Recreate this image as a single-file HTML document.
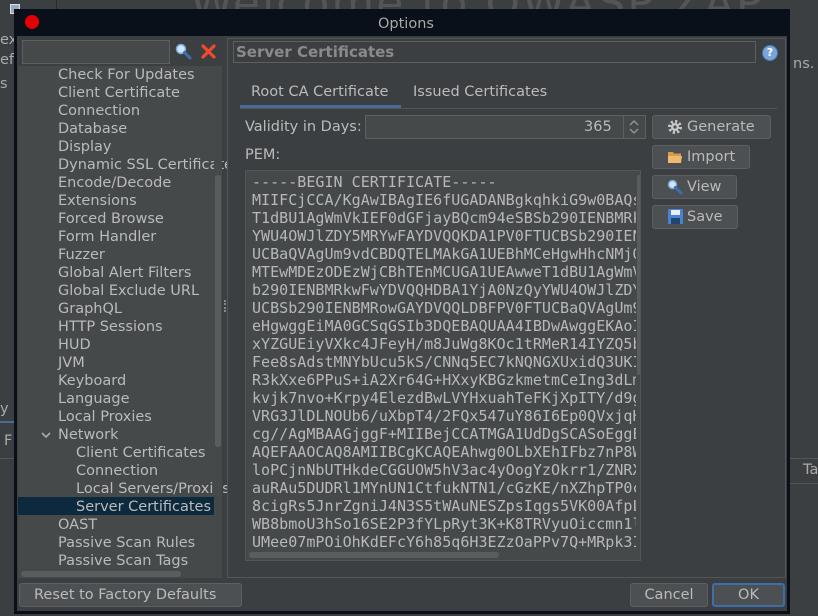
<!DOCTYPE html>
<html><head><meta charset="utf-8"><style>
*{box-sizing:border-box;margin:0;padding:0}
body{width:818px;height:616px;overflow:hidden;background:#3c3f41;font-family:"DejaVu Sans","Liberation Sans",sans-serif;font-size:14px;color:#bbbbbb;position:relative}
.a{position:absolute}
.btn{position:absolute;background:#4c5052;border:1px solid #5e6060;border-radius:3px;color:#bbb;height:24px;line-height:22px;font-size:14.5px}
.t{position:absolute;white-space:nowrap;font-size:14.5px;line-height:18px}
.mono{font-family:"DejaVu Sans Mono","Liberation Mono",monospace;font-size:15.05px;line-height:18px;color:#b8b8b8;white-space:pre}
</style></head><body>
<div class="a" style="left:0;top:0;width:818px;height:616px;background:#3c3f41"></div>
<div class="a" style="left:56px;top:0;width:1px;height:30px;background:#2b2b2b"></div>
<div class="a" style="left:190px;top:-22px;font-size:44px;color:#555;white-space:nowrap;letter-spacing:2px">Welcome to OWASP ZAP</div>
<div class="a" style="left:10px;top:4px;width:10px;height:10px;background:#9ab;border:1px solid #dde"></div>
<div class="t" style="left:0;top:31px;color:#aaa">ex</div>
<div class="t" style="left:0;top:51px;color:#aaa">efa</div>
<div class="t" style="left:0;top:75px;color:#aaa">s</div>
<div class="t" style="left:0;top:400px;color:#aaa">y</div>
<div class="a" style="left:0;top:421px;width:14px;height:2px;background:#4a6a9a"></div>
<div class="t" style="left:4px;top:432px;color:#aaa">F</div>
<div class="a" style="left:0;top:458px;width:14px;height:1px;background:#555"></div>
<div class="t" style="left:793px;top:55px;color:#aaa">ns.</div>
<div class="a" style="left:790px;top:458px;width:28px;height:1px;background:#555"></div>
<div class="a" style="left:790px;top:483px;width:28px;height:1px;background:#555"></div>
<div class="t" style="left:803px;top:461px;color:#aaa">Ta</div>

<div class="a" style="left:14px;top:9px;width:776px;height:605px;background:#0a101a"></div>
<div class="a" style="left:25px;top:15px;width:14px;height:14px;border-radius:50%;background:#e00000"></div>
<div class="a" style="left:378px;top:16px;font-size:14.5px;color:#a8a8a8">Options</div>
<div class="a" style="left:17px;top:36px;width:770px;height:575px;background:#3c3f41"></div>

<div class="a" style="left:18px;top:38px;width:204px;height:540px;background:#45494a"></div>
<div class="a" style="left:18px;top:38px;width:204px;height:28px;background:#3c3f41"></div>
<div class="a" style="left:22px;top:40px;width:148px;height:24px;border:1px solid #5e6060;background:#45494a"></div>
<svg class="a" style="left:174px;top:42px" width="18" height="18" viewBox="0 0 18 18"><circle cx="7" cy="7" r="4.5" fill="#cfe6ff" stroke="#7aa7d8" stroke-width="1.5"/><path d="M10.5 10.5 L16 16" stroke="#3b6fb0" stroke-width="3" stroke-linecap="round"/></svg>
<svg class="a" style="left:201px;top:44px" width="15" height="15" viewBox="0 0 15 15"><path d="M2 2 L13 13 M13 2 L2 13" stroke="#f04a2a" stroke-width="3.2" stroke-linecap="round"/></svg>
<div class="a" style="left:18px;top:497px;width:196px;height:18px;background:#0d293e"></div>
<div class="t" style="left:58px;top:66px">Check For Updates</div>
<div class="t" style="left:58px;top:84px">Client Certificate</div>
<div class="t" style="left:58px;top:102px">Connection</div>
<div class="t" style="left:58px;top:120px">Database</div>
<div class="t" style="left:58px;top:138px">Display</div>
<div class="t" style="left:58px;top:156px">Dynamic SSL Certificates</div>
<div class="t" style="left:58px;top:174px">Encode/Decode</div>
<div class="t" style="left:58px;top:192px">Extensions</div>
<div class="t" style="left:58px;top:210px">Forced Browse</div>
<div class="t" style="left:58px;top:228px">Form Handler</div>
<div class="t" style="left:58px;top:246px">Fuzzer</div>
<div class="t" style="left:58px;top:264px">Global Alert Filters</div>
<div class="t" style="left:58px;top:282px">Global Exclude URL</div>
<div class="t" style="left:58px;top:300px">GraphQL</div>
<div class="t" style="left:58px;top:318px">HTTP Sessions</div>
<div class="t" style="left:58px;top:336px">HUD</div>
<div class="t" style="left:58px;top:354px">JVM</div>
<div class="t" style="left:58px;top:372px">Keyboard</div>
<div class="t" style="left:58px;top:390px">Language</div>
<div class="t" style="left:58px;top:408px">Local Proxies</div>
<svg class="a" style="left:41px;top:431px" width="10" height="8"><path d="M1 2 L5 6 L9 2" stroke="#aaa" stroke-width="1.6" fill="none"/></svg>
<div class="t" style="left:58px;top:426px">Network</div>
<div class="t" style="left:76px;top:444px">Client Certificates</div>
<div class="t" style="left:76px;top:462px">Connection</div>
<div class="t" style="left:76px;top:480px">Local Servers/Proxies</div>
<div class="t" style="left:76px;top:498px">Server Certificates</div>
<div class="t" style="left:58px;top:516px">OAST</div>
<div class="t" style="left:58px;top:534px">Passive Scan Rules</div>
<div class="t" style="left:58px;top:552px">Passive Scan Tags</div>
<div class="a" style="left:214px;top:66px;width:8px;height:504px;background:#45494a"></div>
<div class="a" style="left:215px;top:175px;width:6px;height:272px;border-radius:3px;background:#5a5d5f"></div>
<div class="a" style="left:18px;top:570px;width:204px;height:8px;background:#45494a"></div>
<div class="a" style="left:21px;top:571px;width:160px;height:6px;border-radius:3px;background:#5a5d5f"></div>
<div class="a" style="left:224px;top:300px;width:2px;height:12px;border-left:2px dotted #888"></div>

<div class="a" style="left:227px;top:38px;width:559px;height:540px;border:1px solid #555;background:#3c3f41"></div>
<div class="a" style="left:233px;top:41px;width:523px;height:22px;border:1px solid #5e6060;background:#3c3f41;font-weight:bold;color:#8a8a8a;font-size:15px;line-height:20px;padding-left:2px">Server Certificates</div>
<div class="a" style="left:762px;top:45px;width:16px;height:16px;border-radius:50%;background:#7aa5d8;border:1px solid #4a78b0;color:#fff;font-size:11px;font-weight:bold;text-align:center;line-height:14px">?</div>
<div class="t" style="left:251px;top:83px">Root CA Certificate</div>
<div class="t" style="left:413px;top:83px">Issued Certificates</div>
<div class="a" style="left:240px;top:105px;width:161px;height:3px;background:#4a6a9a"></div>
<div class="a" style="left:240px;top:108px;width:537px;height:1px;background:#555"></div>
<div class="t" style="left:245px;top:118px">Validity in Days:</div>
<div class="a" style="left:365px;top:115px;width:281px;height:24px;border:1px solid #5e6060;background:#45494a"></div>
<div class="t" style="left:584px;top:118px">365</div>
<div class="a" style="left:623px;top:116px;width:1px;height:22px;background:#5e6060"></div>
<svg class="a" style="left:627px;top:118px" width="14" height="18"><path d="M3 7 L7 3 L11 7 M3 11 L7 15 L11 11" stroke="#999" stroke-width="1.3" fill="none"/></svg>
<div class="t" style="left:245px;top:146px">PEM:</div>
<div class="a" style="left:245px;top:170px;width:396px;height:391px;border:1px solid #555;background:#45494a;overflow:hidden">
<div class="mono a" style="left:6px;top:2px;width:384px;height:378px;overflow:hidden">-----BEGIN CERTIFICATE-----
MIIFCjCCA/KgAwIBAgIE6fUGADANBgkqhkiG9w0BAQsFADCB
T1dBU1AgWmVkIEF0dGFjayBQcm94eSBSb290IENBMRkwFwYD
YWU4OWJlZDY5MRYwFAYDVQQKDA1PV0FTUCBSb290IENBMRkw
UCBaQVAgUm9vdCBDQTELMAkGA1UEBhMCeHgwHhcNMjQwMTEw
MTEwMDEzODEzWjCBhTEnMCUGA1UEAwweT1dBU1AgWmVkIEF0
b290IENBMRkwFwYDVQQHDBA1YjA0NzQyYWU4OWJlZDY5MRYw
UCBSb290IENBMRowGAYDVQQLDBFPV0FTUCBaQVAgUm9vdCBD
eHgwggEiMA0GCSqGSIb3DQEBAQUAA4IBDwAwggEKAoIBAQCx
xYZGUEiyVXkc4JFeyH/m8JuWg8KOc1tRMeR14IYZQ5bXXXXX
Fee8sAdstMNYbUcu5kS/CNNq5EC7kNQNGXUxidQ3UKIXXXXX
R3kXxe6PPuS+iA2Xr64G+HXxyKBGzkmetmCeIng3dLmXXXXX
kvjk7nvo+Krpy4ElezdBwLVYHxuahTeFKjXpITY/d9gXXXXX
VRG3JlDLNOUb6/uXbpT4/2FQx547uY86I6Ep0QVxjqHXXXXX
cg//AgMBAAGjggF+MIIBejCCATMGA1UdDgSCASoEggEmXXXX
AQEFAAOCAQ8AMIIBCgKCAQEAhwg0OLbXEhIFbz7nP8WXXXXX
loPCjnNbUTHkdeCGGUOW5hV3ac4yOogYzOkrr1/ZNRXXXXXX
auRAu5DUDRl1MYnUN1CtfukNTN1/cGzKE/nXZhpTP0cXXXXX
8cigRs5JnrZgniJ4N3S5tWAuNESZpsIqgs5VK00AfpLXXXXX
WB8bmoU3hSo16SE2P3fYLpRyt3K+K8TRVyuOiccmn1lXXXXX
UMee07mPOiOhKdEFcY6h85q6H3EZzOaPPv7Q+MRpk3IXXXXX</div>
<div class="a" style="left:391px;top:4px;width:4px;height:200px;border-radius:2px;background:#5a5d5f"></div>
<div class="a" style="left:3px;top:381px;width:250px;height:6px;border-radius:3px;background:#5a5d5f"></div>
</div>
<div class="btn" style="left:652px;top:115px;width:119px;padding-left:34px">Generate</div>
<svg class="a" style="left:667px;top:119px" width="16" height="16" viewBox="0 0 16 16"><circle cx="8" cy="8" r="5.5" fill="none" stroke="#c8c8c8" stroke-width="3" stroke-dasharray="2.2 2.1"/><circle cx="8" cy="8" r="4" fill="#c8c8c8"/><circle cx="8" cy="8" r="1.6" fill="#4c5052"/></svg>
<div class="btn" style="left:652px;top:145px;width:98px;padding-left:34px">Import</div>
<svg class="a" style="left:667px;top:149px" width="16" height="16" viewBox="0 0 16 16"><path d="M1 3 H6 L7 4.5 H14 V14 H1 Z" fill="#d79a4a"/><path d="M1 7 H15 L14 14 H1 Z" fill="#f0b870"/></svg>
<div class="btn" style="left:652px;top:175px;width:85px;padding-left:34px">View</div>
<svg class="a" style="left:666px;top:178px" width="18" height="18" viewBox="0 0 18 18"><circle cx="6.5" cy="6.5" r="4" fill="#cfe6ff" stroke="#7aa7d8" stroke-width="1.5"/><path d="M9.5 9.5 L15 15" stroke="#3b6fb0" stroke-width="3" stroke-linecap="round"/></svg>
<div class="btn" style="left:652px;top:205px;width:86px;padding-left:34px">Save</div>
<svg class="a" style="left:668px;top:209px" width="15" height="15" viewBox="0 0 15 15"><rect x="0" y="0" width="15" height="15" rx="1" fill="#4a82d0"/><rect x="3" y="1" width="9" height="5" fill="#e8eef8"/><rect x="3" y="9" width="9" height="6" fill="#23446e"/></svg>

<div class="btn" style="left:19px;top:583px;width:223px;padding-left:14px">Reset to Factory Defaults</div>
<div class="btn" style="left:630px;top:583px;width:78px;text-align:center">Cancel</div>
<div class="btn" style="left:712px;top:583px;width:73px;text-align:center;border:2px solid #3d6ea8;line-height:20px">OK</div>
</body></html>
